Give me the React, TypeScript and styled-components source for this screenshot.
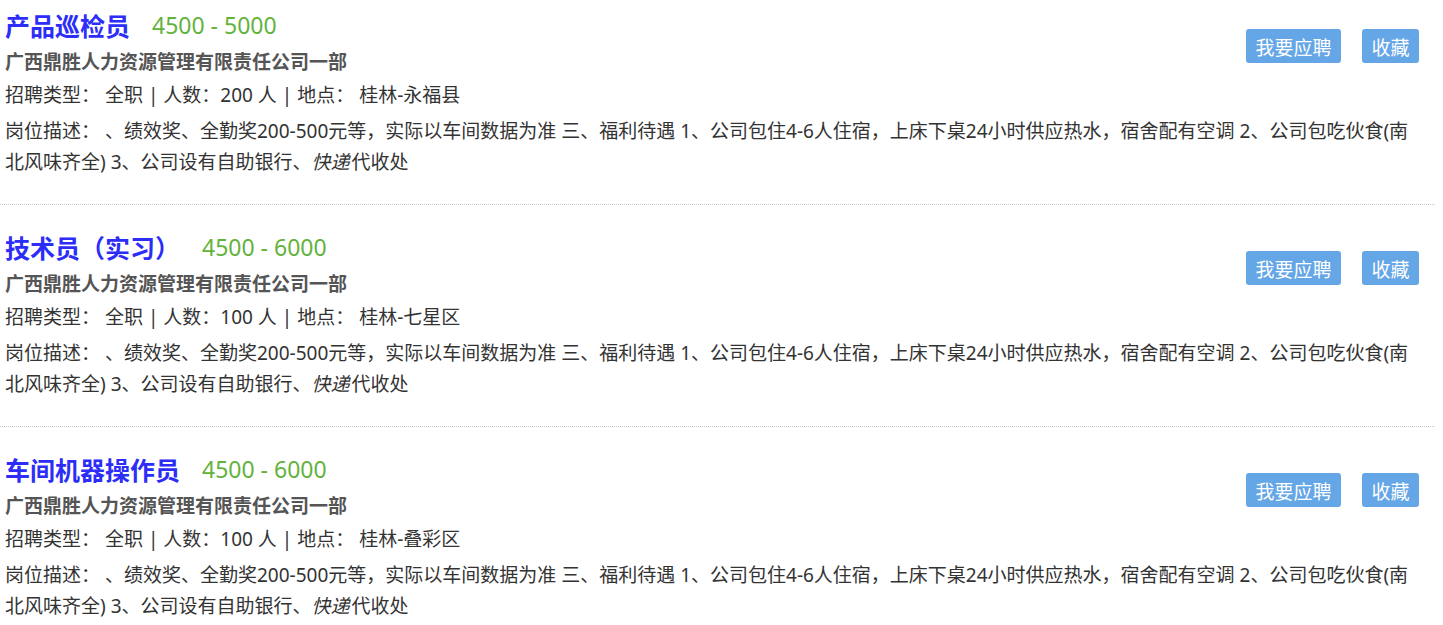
import styled, { createGlobalStyle } from "styled-components";

const jobs = [
  { id: 1, title: "产品巡检员", salary: "4500 - 5000", count: 200, place: "桂林-永福县" },
  { id: 2, title: "技术员（实习）", salary: "4500 - 6000", count: 100, place: "桂林-七星区" },
  { id: 3, title: "车间机器操作员", salary: "4500 - 6000", count: 100, place: "桂林-叠彩区" },
];

const company = "广西鼎胜人力资源管理有限责任公司一部";

const GlobalStyle = createGlobalStyle`
  body {
    margin: 0;
    background: #fff;
    font-family: "Noto Sans", "Noto Sans CJK SC", sans-serif;
    color: #333;
  }
`;

const JobList = styled.div`
  width: 1435px;
`;

const JobItem = styled.div`
  padding: 24px 16px 26px 5px;
  border-bottom: 1px dotted #c8c8c8;
  &:first-child {
    padding-top: 7px;
  }
`;

const Head = styled.div`
  display: flex;
  justify-content: space-between;
  align-items: flex-start;
`;

const Info = styled.div`
  display: flex;
  flex-direction: column;
`;

const TitleRow = styled.div`
  display: flex;
  align-items: center;
  height: 36px;
`;

const Title = styled.span`
  font-family: "Noto Sans CJK SC", sans-serif;
  font-size: 25px;
  font-weight: 700;
  color: #2d2df8;
`;

const Salary = styled.span`
  margin-left: 22px;
  font-size: 23px;
  color: #62b33c;
`;

const Company = styled.div`
  height: 36px;
  line-height: 36px;
  font-family: "Noto Sans CJK SC", sans-serif;
  font-size: 19px;
  font-weight: 700;
  color: #555;
`;

const Meta = styled.div`
  height: 33px;
  line-height: 33px;
  font-size: 19px;
`;

const Actions = styled.div`
  display: flex;
  gap: 21px;
  margin-top: 22px;
`;

const Button = styled.button`
  height: 34px;
  padding: 0 9.5px;
  border: none;
  border-radius: 3px;
  background: #65a6e6;
  color: #fff;
  font-family: "Noto Sans CJK SC", sans-serif;
  font-size: 19px;
  cursor: pointer;
`;

const Desc = styled.div`
  margin-top: 4px;
  font-size: 19px;
  line-height: 31px;
`;

const Em = styled.i`
  padding-right: 2px;
`;

const App = () => (
  <>
    <GlobalStyle />
    <JobList>
      {jobs.map((job) => (
        <JobItem key={job.id}>
          <Head>
            <Info>
              <TitleRow>
                <Title>{job.title}</Title>
                <Salary>{job.salary}</Salary>
              </TitleRow>
              <Company>{company}</Company>
              <Meta>
                招聘类型： 全职 | 人数：{job.count} 人 | 地点： {job.place}
              </Meta>
            </Info>
            <Actions>
              <Button>我要应聘</Button>
              <Button>收藏</Button>
            </Actions>
          </Head>
          <Desc>
            岗位描述： 、绩效奖、全勤奖200-500元等，实际以车间数据为准 三、福利待遇 1、公司包住4-6人住宿，上床下桌24小时供应热水，宿舍配有空调 2、公司包吃伙食(南北风味齐全) 3、公司设有自助银行、<Em>快递</Em>代收处
          </Desc>
        </JobItem>
      ))}
    </JobList>
  </>
);

export default App;
